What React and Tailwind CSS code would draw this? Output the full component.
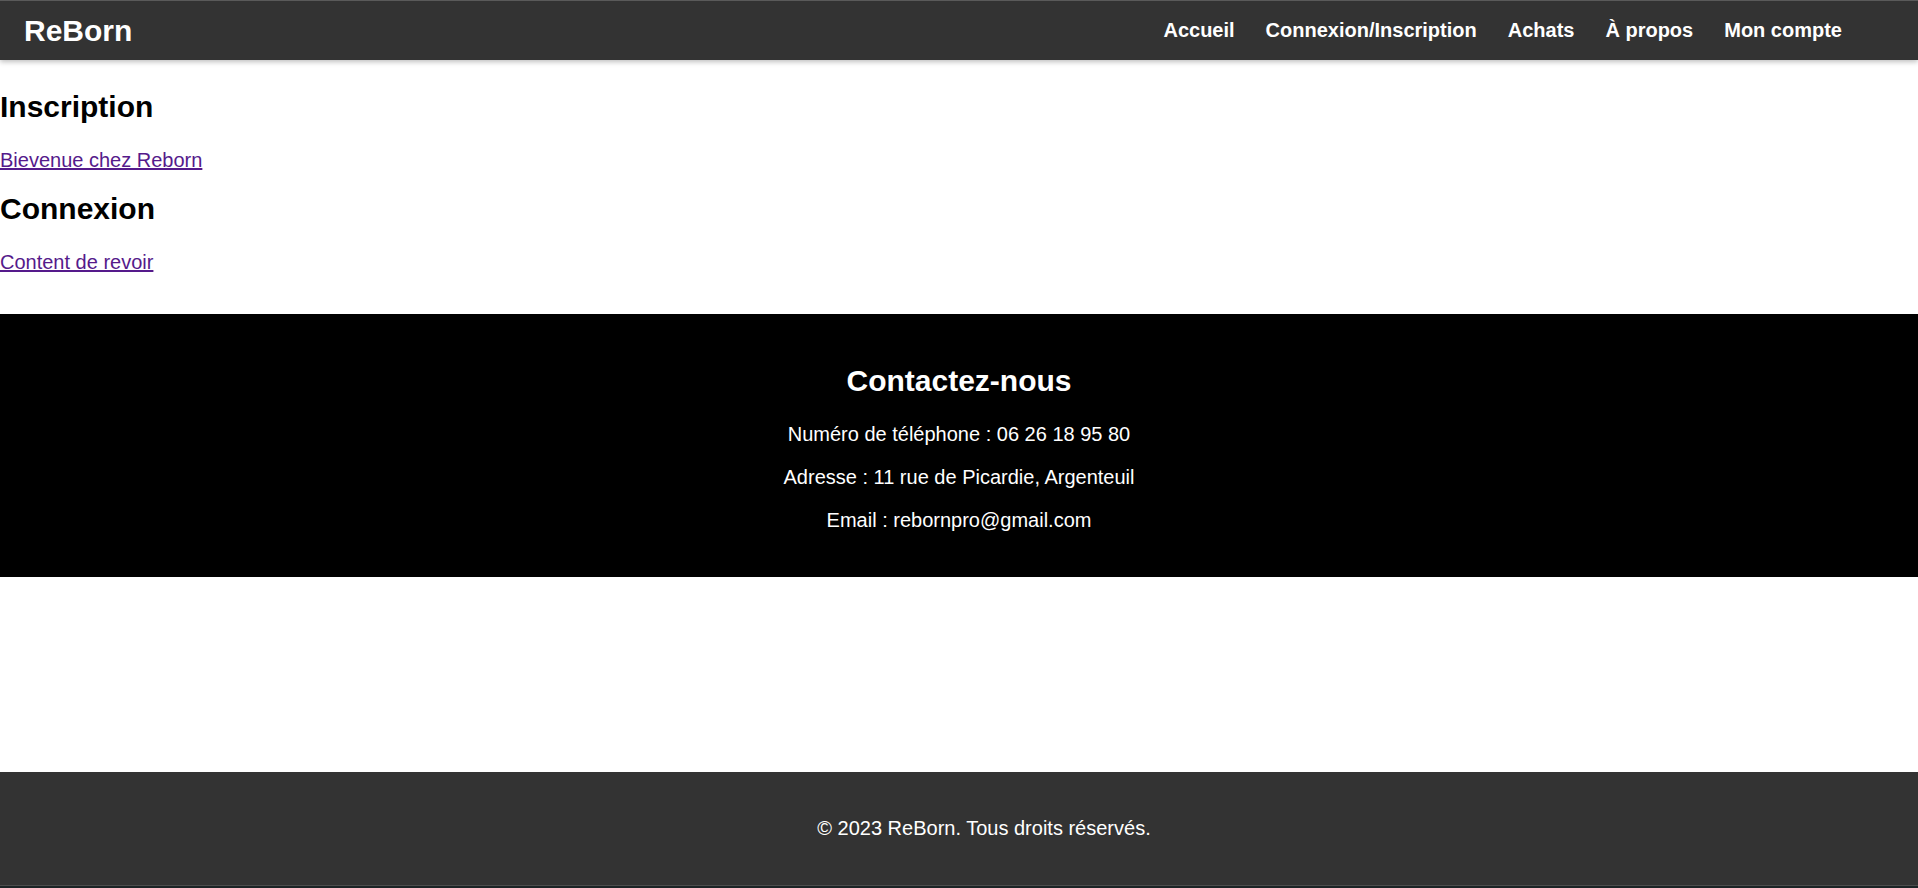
import React from "react";

const navLinks = ["Accueil", "Connexion/Inscription", "Achats", "À propos", "Mon compte"];

function Header() {
  return (
    <header className="relative z-10 flex h-[60px] shrink-0 items-center justify-between border-t border-[#5a5a5a] bg-[#333333] pl-[24px] pr-[76px] shadow-[0_2px_5px_rgba(0,0,0,0.25)]">
      <div className="pt-[1px] text-[30px] leading-[34px] font-bold text-white">ReBorn</div>
      <nav className="pt-[2px]">
        <ul className="flex items-center gap-[31px]">
          {navLinks.map((link) => (
            <li key={link}>
              <a href="#" className="text-[20px] leading-[23px] font-bold text-white">
                {link}
              </a>
            </li>
          ))}
        </ul>
      </nav>
    </header>
  );
}

function AuthLinks() {
  return (
    <main className="mb-[40px]">
      <h2 className="mt-[30px] mb-[25px] text-[30px] leading-[34px] font-bold text-black">Inscription</h2>
      <p className="text-[20px] leading-[23px]">
        <a href="#" className="text-[#551a8b] underline">
          Bievenue chez Reborn
        </a>
      </p>
      <h2 className="mt-[20px] mb-[25px] text-[30px] leading-[34px] font-bold text-black">Connexion</h2>
      <p className="text-[20px] leading-[23px]">
        <a href="#" className="text-[#551a8b] underline">
          Content de revoir
        </a>
      </p>
    </main>
  );
}

function Contact() {
  return (
    <section className="bg-black py-[25px] text-center text-white">
      <h2 className="my-[25px] text-[30px] leading-[34px] font-bold">Contactez-nous</h2>
      <p className="mb-[20px] text-[20px] leading-[23px]">Numéro de téléphone : 06 26 18 95 80</p>
      <p className="mb-[20px] text-[20px] leading-[23px]">Adresse : 11 rue de Picardie, Argenteuil</p>
      <p className="mb-[20px] text-[20px] leading-[23px]">Email : rebornpro@gmail.com</p>
    </section>
  );
}

export default function App() {
  return (
    <div
      className="flex h-[888px] flex-col overflow-hidden bg-white text-black"
      style={{ fontFamily: '"Liberation Sans", Arial, sans-serif' }}
    >
      <Header />
      <AuthLinks />
      <Contact />
      <div className="flex-1" />
      <footer className="h-[113px] shrink-0 bg-[#333333] py-[45px] pl-[50px] text-center text-white">
        <p className="text-[20px] leading-[23px]">© 2023 ReBorn. Tous droits réservés.</p>
      </footer>
      <div className="h-[3px] shrink-0 border-t border-[#4d4d4d] bg-[#1c2426]" />
    </div>
  );
}
